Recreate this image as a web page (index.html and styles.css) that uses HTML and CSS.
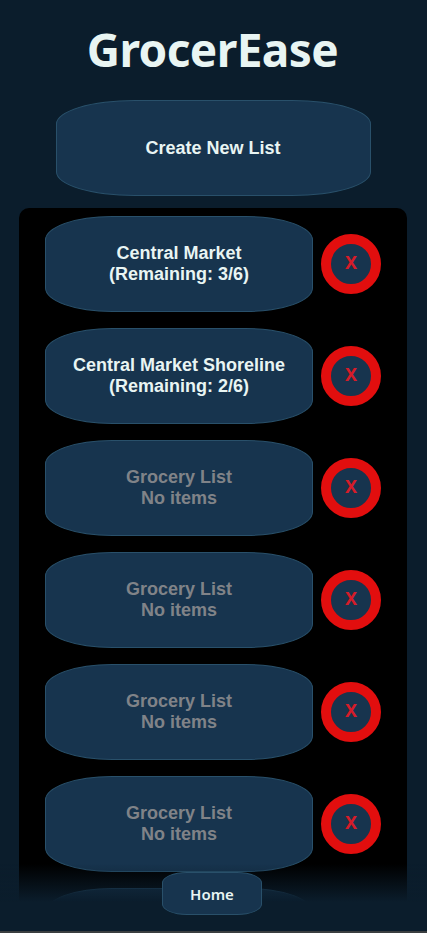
FILE: index.html
```html
<!DOCTYPE html>
<html lang="en">
<head>
<meta charset="utf-8">
<title>GrocerEase</title>
<link rel="stylesheet" href="styles.css">
</head>
<body>
<main class="app">
  <h1 class="title"><span>GrocerEase</span></h1>
  <button class="pill create">Create New List</button>
  <section class="lists">
    <div class="row"><button class="pill">Central Market<br>(Remaining: 3/6)</button><button class="delete">X</button></div>
    <div class="row"><button class="pill">Central Market Shoreline<br>(Remaining: 2/6)</button><button class="delete">X</button></div>
    <div class="row"><button class="pill empty">Grocery List<br>No items</button><button class="delete">X</button></div>
    <div class="row"><button class="pill empty">Grocery List<br>No items</button><button class="delete">X</button></div>
    <div class="row"><button class="pill empty">Grocery List<br>No items</button><button class="delete">X</button></div>
    <div class="row"><button class="pill empty">Grocery List<br>No items</button><button class="delete">X</button></div>
    <div class="row"><button class="pill empty"></button></div>
  </section>
</main>
<footer class="footer"><button class="home">Home</button></footer>
</body>
</html>
```
FILE: styles.css
```css
* { box-sizing: border-box; }
html, body { height: 100%; }
body {
  margin: 0;
  overflow: hidden;
  background: #0b1d2c;
  color: #e9f5f3;
  font-family: "Noto Sans", "Open Sans", sans-serif;
}
button { margin: 0; padding: 0; color: inherit; }
.app {
  display: flex;
  flex-direction: column;
  align-items: center;
  height: 933px;
  overflow: hidden;
}
.title {
  flex: none;
  height: 100px;
  margin: 0 2px 0 0;
  font-size: 46px;
  line-height: 99px;
  letter-spacing: -0.6px;
}
.pill {
  flex: none;
  width: 268px;
  height: 96px;
  border: 1px solid #29506a;
  border-radius: 25%;
  background: #17344e;
  font: bold 18px/21px "Liberation Sans", Arial, sans-serif;
}
.create { width: 315px; padding-right: 1px; }
.empty { color: #808388; }
.lists {
  flex: none;
  display: flex;
  flex-direction: column;
  gap: 16px;
  width: 388px;
  height: 725px;
  margin: 12px 1px 0 0;
  padding: 8px 26px;
  overflow: hidden;
  border-radius: 10px 10px 0 0;
  background: #000;
}
.row { display: flex; align-items: center; gap: 8px; }
.delete {
  flex: none;
  width: 60px;
  height: 60px;
  padding-bottom: 4px;
  border: 10px solid #e20e0e;
  border-radius: 50%;
  background: #17344e;
  color: #d51c29;
  font: bold 18px/20px "Noto Sans", sans-serif;
}
.footer {
  position: fixed;
  inset: auto 0 0;
  display: flex;
  justify-content: center;
  height: 69px;
  padding: 8px 3px 0 0;
  border-bottom: 2px solid #3a3e40;
  background: linear-gradient(to bottom, transparent, #0b1d2c 38px);
}
.home {
  width: 100px;
  height: 43px;
  border: 1px solid #29506a;
  border-radius: 25%;
  background: #17344e;
  font: 600 15px/22px "Noto Sans", sans-serif;
}
```
